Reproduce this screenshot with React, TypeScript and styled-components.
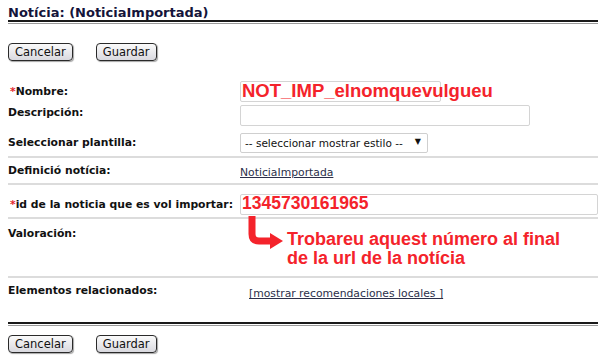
import styled, { createGlobalStyle } from "styled-components";

const GlobalStyle = createGlobalStyle`
  html, body {
    margin: 0;
    padding: 0;
    background: #fff;
  }
  body {
    font-family: "DejaVu Sans", Verdana, sans-serif;
    color: #111;
  }
`;

const Page = styled.div`
  width: 600px;
  height: 358px;
  padding: 0 2px 0 8px;
  box-sizing: border-box;
  overflow: hidden;
`;

const Title = styled.h1`
  margin: 0;
  padding-top: 5px;
  height: 15px;
  font-size: 13px;
  line-height: 15px;
  font-weight: bold;
  color: #14143a;
`;

const HeavyRule = styled.hr<{ $top: number }>`
  margin: ${(p) => p.$top}px 0 0;
  height: 1px;
  border: none;
  border-top: 2px solid #1a1a1a;
  border-bottom: 1px solid #9a9a9a;
`;

const Actions = styled.div<{ $top: number }>`
  display: flex;
  gap: 23px;
  margin-top: ${(p) => p.$top}px;
  height: 19px;
`;

const Button = styled.button`
  height: 18px;
  padding: 0 6px;
  font-family: "DejaVu Sans", Verdana, sans-serif;
  font-size: 11.5px;
  color: #111;
  border: 1px solid #2a2a2a;
  border-radius: 4px;
  background: linear-gradient(#fafafa, #d9d9df);
  box-shadow: 1px 1px 1px rgba(0, 0, 0, 0.35);
  line-height: 14px;
`;

const Row = styled.div<{ $h: number; $align?: string }>`
  display: flex;
  align-items: ${(p) => p.$align ?? "center"};
  height: ${(p) => p.$h}px;
  box-sizing: border-box;
`;

const Label = styled.div<{ $pad?: number }>`
  width: 232px;
  flex: none;
  font-size: 10.8px;
  font-weight: bold;
  padding-top: ${(p) => p.$pad ?? 0}px;
  white-space: nowrap;
`;

const Star = styled.span`
  color: #e3262e;
  font-weight: bold;
  margin-left: 2px;
`;

const Value = styled.div<{ $align?: string }>`
  flex: 1;
  display: flex;
  align-items: ${(p) => p.$align ?? "center"};
  position: relative;
`;

const TextInput = styled.input<{ $w: number }>`
  box-sizing: border-box;
  width: ${(p) => p.$w}px;
  height: 21px;
  margin: 0;
  padding: 0 2px;
  border: 1px solid #d4d4d4;
  border-radius: 2px;
  background: #fff;
  outline: none;
`;

const RedValue = styled.span<{ $size: number }>`
  position: absolute;
  left: 2px;
  top: 50%;
  transform: translateY(-52%);
  font-family: "Liberation Sans", Arial, sans-serif;
  font-weight: bold;
  font-size: ${(p) => p.$size}px;
  color: #f4232b;
  white-space: nowrap;
  pointer-events: none;
`;

const SelectWrap = styled.div`
  position: relative;
  width: 188px;
  height: 20px;
`;

const Select = styled.select`
  appearance: none;
  box-sizing: border-box;
  width: 100%;
  height: 100%;
  margin: 0;
  padding: 0 0 0 4px;
  border: 1px solid #cfcfcf;
  border-radius: 2px;
  background: #fff;
  font-family: "DejaVu Sans", Verdana, sans-serif;
  font-size: 10.5px;
  color: #111;
`;

const Caret = styled.span`
  position: absolute;
  right: 7px;
  top: 5px;
  font-size: 8px;
  color: #111;
  pointer-events: none;
`;

const Rule = styled.div`
  height: 2px;
  background: #dcdcdc;
`;

const Link = styled.a<{ $indent?: number; $top?: number }>`
  font-size: 10.8px;
  color: #2b2f4a;
  text-decoration: underline;
  margin-left: ${(p) => p.$indent ?? 0}px;
  margin-top: ${(p) => p.$top ?? 4}px;
  cursor: pointer;
`;

const Note = styled.div`
  display: flex;
  align-items: flex-start;
  margin-top: -3px;
`;

const Arrow = styled.svg`
  flex: none;
  width: 47px;
  height: 40px;
`;

const NoteText = styled.div`
  font-family: "Liberation Sans", Arial, sans-serif;
  font-weight: bold;
  font-size: 18px;
  line-height: 19px;
  color: #f4232b;
  margin-top: 14px;
`;

export default function App() {
  return (
    <>
      <GlobalStyle />
      <Page>
        <Title>Notícia: (NoticiaImportada)</Title>
        <HeavyRule $top={0} />
        <Actions $top={19}>
          <Button>Cancelar</Button>
          <Button>Guardar</Button>
        </Actions>

        <Row $h={24} style={{ marginTop: 17 }}>
          <Label>
            <Star>*</Star>Nombre:
          </Label>
          <Value>
            <TextInput $w={201} readOnly />
            <RedValue $size={18.5}>NOT_IMP_elnomquevulgueu</RedValue>
          </Value>
        </Row>
        <Row $h={27} $align="flex-start">
          <Label $pad={3}>Descripción:</Label>
          <Value style={{ paddingTop: 2 }}>
            <TextInput $w={290} />
          </Value>
        </Row>
        <Row $h={24}>
          <Label>Seleccionar plantilla:</Label>
          <Value>
            <SelectWrap>
              <Select defaultValue="">
                <option value="">-- seleccionar mostrar estilo --</option>
              </Select>
              <Caret>▼</Caret>
            </SelectWrap>
          </Value>
        </Row>
        <Rule style={{ marginTop: 2 }} />
        <Row $h={25}>
          <Label>Definició notícia:</Label>
          <Value>
            <Link>NoticiaImportada</Link>
          </Value>
        </Row>
        <Rule />
        <Row $h={32} style={{ paddingTop: 6 }}>
          <Label>
            <Star>*</Star>id de la noticia que es vol importar:
          </Label>
          <Value>
            <TextInput $w={358} readOnly />
            <RedValue $size={17.5}>1345730161965</RedValue>
          </Value>
        </Row>
        <Rule />
        <Row $h={57} $align="flex-start">
          <Label $pad={8}>Valoración:</Label>
          <Value $align="flex-start">
            <Note>
              <Arrow viewBox="0 0 47 40">
                <path
                  d="M12 0 V18 Q12 25 19 25 H32"
                  fill="none"
                  stroke="#f4232b"
                  strokeWidth="7"
                />
                <polygon points="30,17 43,25 30,33" fill="#f4232b" />
              </Arrow>
              <NoteText>
                Trobareu aquest número al final
                <br />
                de la url de la notícia
              </NoteText>
            </Note>
          </Value>
        </Row>
        <Rule />
        <Row $h={44} $align="flex-start">
          <Label $pad={6}>Elementos relacionados:</Label>
          <Value>
            <Link $indent={9} $top={9}>
              [mostrar recomendaciones locales ]
            </Link>
          </Value>
        </Row>
        <HeavyRule $top={0} />
        <Actions $top={9}>
          <Button>Cancelar</Button>
          <Button>Guardar</Button>
        </Actions>
      </Page>
    </>
  );
}
